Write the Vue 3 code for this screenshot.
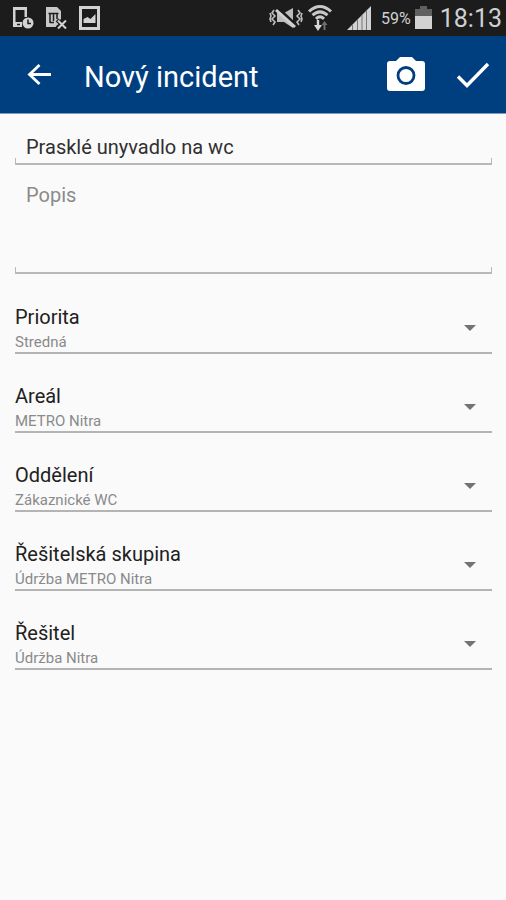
<script setup>
import { ref } from 'vue'

const title = ref('Prasklé unyvadlo na wc')
const description = ref('')

const fields = ref([
  { id: 'priorita', label: 'Priorita', value: 'Stredná' },
  { id: 'areal', label: 'Areál', value: 'METRO Nitra' },
  { id: 'oddeleni', label: 'Oddělení', value: 'Zákaznické WC' },
  { id: 'skupina', label: 'Řešitelská skupina', value: 'Údržba METRO Nitra' },
  { id: 'resitel', label: 'Řešitel', value: 'Údržba Nitra' },
])
</script>

<template>
  <div class="screen">
    <div class="status">
      <div class="status-left">
        <svg width="22" height="24" viewBox="0 0 22 24" aria-hidden="true">
          <path d="M1 1h14v10h-2.500V4h-9v12H10v5H1z" fill="#d2d2d2" />
          <circle cx="16" cy="17" r="5.500" fill="#d2d2d2" />
          <path d="M16 13.500v4h3" fill="none" stroke="#1c1c1c" stroke-width="1.500" />
          <path d="M5 18.500h3" stroke="#1c1c1c" stroke-width="1.500" />
        </svg>
        <svg width="24" height="24" viewBox="0 0 24 24" aria-hidden="true">
          <path d="M2 1h11l4 4v8l-3 3 2 5H2z" fill="#c8c8c8" />
          <path d="M4.500 7.500h10M6 8v9M9.500 8v7M13 8v5M6 16.500h4" fill="none" stroke="#1c1c1c" stroke-width="1.500" />
          <path d="M13 14l9 8M22 14l-9 8" fill="none" stroke="#1c1c1c" stroke-width="4" />
          <path d="M14 14.500l8 8M22 14.500l-8 8" fill="none" stroke="#d2d2d2" stroke-width="2" />
        </svg>
        <svg width="24" height="26" viewBox="0 0 24 26" aria-hidden="true">
          <rect x="2.500" y="2.500" width="18" height="21" fill="none" stroke="#d2d2d2" stroke-width="3" />
          <path d="M5.500 18v-4l4-2 3 2 5-5v9z" fill="#d2d2d2" />
        </svg>
      </div>
      <div class="status-right">
        <svg width="34" height="22" viewBox="0 0 34 22" aria-hidden="true">
          <path d="M8 6h7l9-5v20l-9-6H8z" fill="#bcbcbc" />
          <path d="M9 1l18 17" stroke="#1c1c1c" stroke-width="3" />
          <path d="M7 3l19 17" stroke="#d0d0d0" stroke-width="3" />
          <path d="M5 3L3 6l3 3-3 3 3 3-2 3M1 6l1 3-1 3 1 3M29 3l2 3-3 3 3 3-3 3 2 3M33 6l-1 3 1 3-1 3" fill="none" stroke="#bcbcbc" stroke-width="1.600" />
        </svg>
        <svg class="wifi" width="26" height="28" viewBox="0 0 26 28" aria-hidden="true">
          <path d="M2 7.500Q13-2.500 24 7.500M5.500 11.200Q13 4.500 20.500 11.200M9 14.800Q13 11 17 14.800" fill="none" stroke="#c8c8c8" stroke-width="3" />
          <path d="M11 16v7" stroke="#d8d8d8" stroke-width="2.400" />
          <path d="M7 21h8l-4 6z" fill="#d8d8d8" />
          <path d="M17.500 19v7" stroke="#707070" stroke-width="2" />
          <path d="M14.500 21h6l-3-4z" fill="#707070" />
        </svg>
        <svg class="signal" width="24" height="25" viewBox="0 0 24 25" aria-hidden="true">
          <path d="M0 24L24 0v24z" fill="#d2d2d2" />
          <path d="M5.500 18v6M10.500 13v11M15 9v15M19.500 4v20" stroke="#777" stroke-width="1" />
        </svg>
        <span class="percent">59%</span>
        <svg width="17" height="24" viewBox="0 0 17 24" aria-hidden="true">
          <path d="M5 0h7v3h5v8H0V3h5z" fill="#606060" />
          <path d="M0 10h17v13H0z" fill="#d2d2d2" />
        </svg>
        <span class="clock">18:13</span>
      </div>
    </div>

    <header class="bar">
      <button class="icon-btn" type="button" aria-label="Zpět">
        <svg width="26" height="24" viewBox="0 0 26 24" aria-hidden="true">
          <path d="M13.500 2L3.500 11.500l10 9.500M3.500 11.500H25" fill="none" stroke="#fff" stroke-width="2.800" />
        </svg>
      </button>
      <h1 class="bar-title">Nový incident</h1>
      <button class="icon-btn" type="button" aria-label="Fotografie">
        <svg width="40" height="36" viewBox="0 0 40 36" aria-hidden="true">
          <path d="M14 0h12l4 4h6a3 3 0 0 1 3 3v24a3 3 0 0 1-3 3H4a3 3 0 0 1-3-3V7a3 3 0 0 1 3-3h6z" fill="#fff" />
          <circle cx="20" cy="18.500" r="8" fill="none" stroke="#003f7f" stroke-width="2.800" />
        </svg>
      </button>
      <button class="icon-btn icon-btn--done" type="button" aria-label="Uložit">
        <svg width="34" height="28" viewBox="0 0 34 28" aria-hidden="true">
          <path d="M2 15.500l9 9L32 3" fill="none" stroke="#fff" stroke-width="3.400" />
        </svg>
      </button>
    </header>

    <form class="form" @submit.prevent>
      <div class="text-field">
        <input v-model="title" class="text-input" type="text" aria-label="Název" />
      </div>
      <div class="text-field text-field--area">
        <textarea v-model="description" class="text-input text-input--area" placeholder="Popis" aria-label="Popis"></textarea>
      </div>

      <div class="selects">
        <div v-for="field in fields" :key="field.id" class="select-field">
          <label class="select-label" :for="field.id">{{ field.label }}</label>
          <select :id="field.id" v-model="field.value" class="select">
            <option>{{ field.value }}</option>
          </select>
          <svg class="arrow" width="12" height="6" viewBox="0 0 12 6" aria-hidden="true">
            <path d="M0 0h12L6 6z" fill="#737373" />
          </svg>
        </div>
      </div>
    </form>
  </div>
</template>

<style>
body {
  background: #fafafa;
}
</style>

<style scoped>
.screen {
  min-height: 100vh;
  background: #fafafa;
  font-family: Roboto, "Noto Sans", sans-serif;
  color: #212121;
}

/* Status bar */
.status {
  display: flex;
  align-items: center;
  justify-content: space-between;
  height: 36px;
  padding: 0 4px 0 12px;
  background: #1c1c1c;
  color: #d0d0d0;
}

.status-left,
.status-right {
  display: flex;
  align-items: center;
}

.status-left {
  gap: 10px;
}

.wifi {
  margin-left: 4px;
}

.signal {
  margin: 0 10px 0 14px;
}

.percent {
  margin-right: 4px;
  font-size: 16px;
}

.clock {
  margin-left: 8px;
  font-size: 25px;
}

/* App bar */
.bar {
  display: flex;
  align-items: center;
  box-sizing: border-box;
  height: 78px;
  padding: 0 16px 0 26px;
  border-bottom: 1px solid #7f9cc0;
  background: #003f7f;
}

.icon-btn {
  display: flex;
  padding: 0;
  border: 0;
  background: none;
  cursor: pointer;
}

.icon-btn--done {
  margin-left: 30px;
}

.bar-title {
  flex: 1;
  margin: 0 0 0 32px;
  padding-top: 4px;
  color: #fff;
  font-size: 29px;
  font-weight: 400;
  line-height: 36px;
}

/* Form */
.form {
  padding: 16px 14px 16px 15px;
}

.text-field {
  position: relative;
  display: flex;
  height: 35px;
}

.text-field--area {
  height: 109px;
}

.text-field::after {
  content: "";
  position: absolute;
  inset: auto 0 0;
  height: 5px;
  border: solid #b8b8b8;
  border-width: 0 1px 2px;
  pointer-events: none;
}

.text-input {
  flex: 1;
  min-width: 0;
  margin: 0;
  padding: 0 11px 2px;
  border: 0;
  outline: 0;
  background: none;
  color: #303030;
  font-family: inherit;
  font-size: 20px;
  line-height: 24px;
  resize: none;
}

.text-input--area {
  padding-top: 18px;
}

.text-input::placeholder {
  color: #8a8a8a;
  opacity: 1;
}

.selects {
  display: grid;
  gap: 28px;
  padding-top: 29px;
}

.select-field {
  display: grid;
  grid-template-columns: 1fr 28px;
  grid-template-rows: 28px 21px;
  border-bottom: 2px solid #b4b4b4;
}

.select-label {
  grid-area: 1 / 1;
  font-size: 20px;
  line-height: 28px;
}

.select {
  grid-area: 2 / 1 / 3 / 3;
  appearance: none;
  margin: 0;
  padding: 2px 0 0;
  border: 0;
  outline: 0;
  background: none;
  color: #8a8a8a;
  font-family: inherit;
  font-size: 15px;
  line-height: 19px;
}

.arrow {
  grid-area: 1 / 2 / 3 / 3;
  align-self: center;
  pointer-events: none;
}
</style>
